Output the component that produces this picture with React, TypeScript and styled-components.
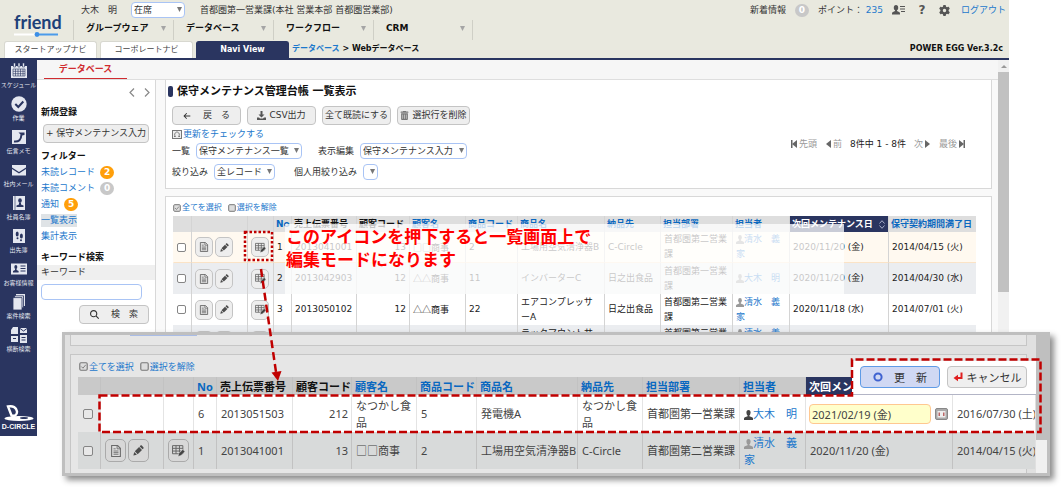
import React from 'react';
import styled, { createGlobalStyle, css } from 'styled-components';
import { FaArrowLeft, FaGear, FaMagnifyingGlass, FaTrashCan } from 'react-icons/fa6';

const navy = '#2a3560';
const link = '#1c78cc';
const red = '#c00000';

const Global = createGlobalStyle`
  *, *::before, *::after { box-sizing: border-box; }
  body {
    margin: 0;
    background: #fff;
    color: #333;
    font: 9px/15px "DejaVu Sans", "Noto Sans CJK JP", sans-serif;
  }
  button, input, select { font: inherit; color: inherit; margin: 0; }
  a { color: ${link}; text-decoration: none; }
  svg { display: block; flex: none; }
  ul { list-style: none; margin: 0; padding: 0; }
`;

const Page = styled.div`
  position: relative;
  min-height: 100vh;
  padding-right: 54px;
  overflow: hidden;
`;

/* ---------- header ---------- */

const Header = styled.header`
  background: #e9e9df;
  border-bottom: 2px solid ${navy};
`;

const HeaderTop = styled.div`
  display: flex;
`;

const Brand = styled.div`
  width: 73px;
  padding: 13px 0 0 14px;
  color: #1d4078;
  font: bold 18px/19px Lato, "Open Sans", sans-serif;
`;

const HeaderRows = styled.div`
  flex: 1;
  min-width: 0;
`;

const StatusRow = styled.div`
  display: flex;
  align-items: center;
  height: 20px;
  padding: 0 3px 0 8px;
  white-space: nowrap;
`;

const PersonName = styled.span`
  width: 50px;
`;

const Department = styled.span`
  margin-left: 15px;
`;

const Utilities = styled.div`
  display: flex;
  align-items: center;
  gap: 9px;
  margin-left: auto;
`;

const IconLink = styled.a`
  display: flex;
  justify-content: center;
  width: 14px;
  color: #555;
  font-weight: bold;
  font-size: 12px;
`;

const Badge = styled.span<{ $tone: 'orange' | 'gray' }>`
  display: inline-flex;
  align-items: center;
  justify-content: center;
  width: 14px;
  height: 13px;
  border-radius: 7px;
  background: ${p => (p.$tone === 'orange' ? '#ff9f0a' : '#c8c8c8')};
  color: #fff;
  font-weight: bold;
  line-height: 13px;
`;

const MainNav = styled.nav`
  display: flex;
  height: 20px;
`;

const NavItem = styled.a`
  display: flex;
  align-items: center;
  justify-content: space-between;
  width: 100px;
  padding: 0 7px 4px 12px;
  border-left: 1px solid #cfcfc6;
  color: #111;
  font-weight: bold;
  &:last-child { border-right: 1px solid #cfcfc6; }
`;

const TabRow = styled.div`
  display: flex;
  align-items: flex-end;
  gap: 3px;
  height: 18px;
  padding-left: 4px;
  font-size: 8px;
`;

const Tab = styled.a<{ $active?: boolean }>`
  width: 93px;
  height: 17px;
  border: 1px solid ${p => (p.$active ? navy : '#d8d8d0')};
  border-bottom: 0;
  border-radius: 3px 3px 0 0;
  background: ${p => (p.$active ? navy : '#fff')};
  color: ${p => (p.$active ? '#fff' : '#444')};
  font-weight: ${p => (p.$active ? 'bold' : 'normal')};
  text-align: center;
`;

const Crumbs = styled.div`
  color: #111;
  font-weight: bold;
  line-height: 18px;
`;

const Version = styled.div`
  margin-left: auto;
  padding-right: 6px;
  color: #111;
  font-weight: bold;
  line-height: 18px;
`;

/* ---------- form parts ---------- */

const SelectBox = styled.span<{ $width: number }>`
  position: relative;
  display: inline-block;
  width: ${p => p.$width}px;
  height: 16px;
  &::after {
    content: "";
    position: absolute;
    right: 3px;
    top: 5px;
    width: 5px;
    height: 5px;
    background: #777;
    clip-path: polygon(0 0, 100% 0, 50% 100%);
    pointer-events: none;
  }
  select {
    appearance: none;
    display: block;
    width: 100%;
    height: 16px;
    padding: 0 2px;
    border: 1px solid #a9c4f5;
    border-radius: 4px;
    background: #fff;
    line-height: 14px;
  }
`;

const Button = styled.button<{ $width: number }>`
  display: inline-flex;
  align-items: center;
  justify-content: center;
  gap: 3px;
  width: ${p => p.$width}px;
  height: 19px;
  padding: 0;
  border: 1px solid #c4c4c4;
  border-radius: 4px;
  background: #eee;
  white-space: nowrap;
`;

const IconButton = styled.button<{ $large?: boolean }>`
  display: inline-flex;
  align-items: center;
  justify-content: center;
  width: ${p => (p.$large ? 21 : 18)}px;
  height: ${p => (p.$large ? 23 : 20)}px;
  padding: 0;
  border: 1px solid ${p => (p.$large ? '#aaa' : '#c4c4c4')};
  border-radius: 5px;
  background: ${p => (p.$large ? '#d8d8d8' : '#eee')};
  color: #555;
  vertical-align: middle;
  & + & { margin-left: 2px; }
`;

const Check = styled.input<{ $large?: boolean }>`
  appearance: none;
  display: block;
  width: ${p => (p.$large ? 10 : 9)}px;
  height: ${p => (p.$large ? 10 : 9)}px;
  border: 1px solid #858585;
  border-radius: 2px;
  background: ${p => (p.$large ? '#e8e8e8' : '#fff')};
`;

/* ---------- body ---------- */

const Body = styled.div`
  display: flex;
  min-height: 376px;
`;

const Rail = styled.nav`
  display: flex;
  flex-direction: column;
  width: 37px;
  background: ${navy};
`;

const RailItem = styled.a`
  display: flex;
  flex-direction: column;
  align-items: center;
  gap: 2px;
  height: 33px;
  padding-top: 3px;
  color: #e8eaf2;
  font-size: 6px;
  line-height: 8px;
  white-space: nowrap;
`;

const RailLogo = styled.div`
  display: flex;
  flex-direction: column;
  align-items: center;
  margin-top: auto;
  padding-bottom: 5px;
  color: #fff;
  font: bold 7px/9px "Liberation Sans", sans-serif;
  white-space: nowrap;
`;

const Content = styled.div`
  flex: 1;
  min-width: 0;
  display: flex;
  flex-direction: column;
`;

const SubHead = styled.div`
  height: 20px;
  padding-left: 7px;
  border-bottom: 1px solid #dedede;
  background: #f6f6f6;
`;

const SubTab = styled.a`
  display: block;
  width: 83px;
  height: 19px;
  border-bottom: 1px solid #d02b30;
  color: #d02b30;
  font-weight: bold;
  line-height: 18px;
  text-align: center;
`;

const Columns = styled.div`
  flex: 1;
  display: flex;
  background: #f9f9f9;
`;

const SidePanel = styled.aside`
  width: 119px;
  border-right: 1px solid #d8d8d8;
  background: #fff;
`;

const Pagers = styled.div`
  display: flex;
  justify-content: flex-end;
  align-items: center;
  gap: 9px;
  height: 24px;
  padding-right: 5px;
  color: #888;
`;

const SideTitle = styled.h2<{ $top?: boolean }>`
  margin: ${p => (p.$top ? 5 : 0)}px 0 0;
  padding-left: 4px;
  color: #111;
  font-size: 9px;
  line-height: 16px;
`;

const NewEntry = styled.div`
  padding: 4px 0 0 6px;
`;

const FilterList = styled.ul`
  padding-left: 4px;
`;

const FilterItem = styled.li<{ $selected?: boolean }>`
  display: flex;
  align-items: center;
  gap: 5px;
  height: 16px;
  a { background: ${p => (p.$selected ? '#dfe3e6' : 'transparent')}; line-height: 13px; }
`;

const KeywordLabel = styled.label`
  display: block;
  padding-left: 4px;
  background: #efefef;
  line-height: 15px;
`;

const KeywordInput = styled.input`
  display: block;
  width: 101px;
  height: 16px;
  margin: 4px 0 5px 4px;
  border: 1px solid #a9c4f5;
  border-radius: 4px;
  background: #fff;
`;

const SearchRow = styled.div`
  display: flex;
  justify-content: flex-end;
  padding-right: 6px;
`;

const MainArea = styled.main`
  flex: 1;
  min-width: 0;
  display: flex;
  flex-direction: column;
  gap: 7px;
  padding: 0 6px 0 9px;
`;

const Panel = styled.section<{ $fill?: boolean }>`
  ${p => p.$fill ? css`flex: 1; border-top: 1px solid #d8d8d8;` : css`border-bottom: 1px solid #d8d8d8;`}
  border-left: 1px solid #d8d8d8;
  border-right: 1px solid #d8d8d8;
  background: #fff;
`;

const ControlPanel = styled(Panel)`
  display: flex;
  align-items: center;
  justify-content: space-between;
  padding: 0 26px 8px 6px;
`;

const PageTitle = styled.h1`
  display: flex;
  align-items: center;
  gap: 4px;
  height: 22px;
  margin: 0 0 4px -4px;
  color: #111;
  font-size: 11px;
  &::before {
    content: "";
    width: 5px;
    height: 11px;
    border-radius: 2px;
    background: ${navy};
  }
`;

const ButtonRow = styled.div`
  display: flex;
  gap: 6px;
`;

const CheckLink = styled.a`
  display: flex;
  align-items: center;
  gap: 1px;
  height: 18px;
`;

const FieldRow = styled.div`
  display: flex;
  align-items: center;
  gap: 16px;
  margin-bottom: 5px;
  label { display: flex; align-items: center; gap: 6px; }
  &:last-child { gap: 19px; margin-bottom: 0; }
`;

const Pager = styled.nav`
  display: flex;
  gap: 8px;
  padding-top: 28px;
  color: #222;
  white-space: nowrap;
  a { display: flex; align-items: center; gap: 2px; color: #999; }
`;

const SelectLinks = styled.div<{ $large?: boolean }>`
  display: flex;
  align-items: center;
  gap: 6px;
  height: ${p => (p.$large ? 22 : 19)}px;
  padding-top: ${p => (p.$large ? 0 : 2)}px;
  padding-left: ${p => (p.$large ? 1 : 0)}px;
  font-size: ${p => (p.$large ? 9 : 8)}px;
  a { display: flex; align-items: center; gap: 1px; }
`;

const ListBody = styled.div`
  padding: 0 15px 0 7px;
`;

const Table = styled.table`
  width: 100%;
  table-layout: fixed;
  border-collapse: separate;
  border-spacing: 0;
  th, td { padding: 0 3px; overflow: hidden; border-left: 1px solid #d4d4d4; }
  th:first-child, td:first-child { border-left-color: transparent; }
  td { height: 31px; vertical-align: middle; color: #222; }
  th { height: 16px; background: #dedede; color: #111; text-align: left; white-space: nowrap; padding: 0 0 0 2px; }
`;

const Row = styled.tr<{ $tone?: 'cream' | 'gray' }>`
  td {
    background: ${p => (p.$tone === 'cream' ? '#fff9f0' : p.$tone === 'gray' ? '#ebedf0' : '#fff')};
    ${p => p.$tone === 'cream' && 'border-bottom: 1px solid #fbe3c6;'}
  }
`;

const Th = styled.th<{ $sorted?: boolean }>`
  && {
    ${p => p.$sorted && `background: ${navy};`}
  }
  a { color: ${p => (p.$sorted ? '#fff' : '#0a68c0')}; }
`;

const SortLabel = styled.a`
  display: flex;
  align-items: center;
  justify-content: space-between;
  padding-right: 3px;
`;

const Cell = styled.td<{ $right?: boolean; $nowrap?: boolean }>`
  text-align: ${p => (p.$right ? 'right' : 'left')};
  white-space: ${p => (p.$nowrap ? 'nowrap' : 'normal')};
`;

const CustomerCell = styled(Cell)`
  font-family: "Noto Sans CJK JP", sans-serif;
`;

const Person = styled.a`
  svg { display: inline-block; vertical-align: -2px; }
`;

const ScrollBar = styled.div`
  width: 11px;
  padding-top: 10px;
  background: #f1f1f1;
  &::before {
    content: "";
    display: block;
    width: 0;
    margin: -5px 0 4px 3px;
    border: 3px solid transparent;
    border-top: 0;
    border-bottom: 3px solid #999;
  }
  &::after { content: ""; display: block; height: 220px; background: #c1c1c1; }
`;

/* ---------- notes over the page ---------- */

const Note = styled.p`
  position: absolute;
  left: 285px;
  top: 224px;
  width: 559px;
  height: 70px;
  margin: 0;
  padding: 0 1px;
  background: rgba(255, 255, 255, 0.75);
  color: #f00;
  font: bold 17px/23px "Noto Sans CJK JP", sans-serif;
`;

const Marks = styled.svg`
  position: absolute;
  left: 0;
  top: 0;
  pointer-events: none;
`;

const Detail = styled.section`
  position: absolute;
  left: 62px;
  right: 13px;
  top: 332px;
  height: 144px;
  display: flex;
  border: 3px solid #bfbfbf;
  background: #e0e0e0;
  box-shadow: 4px 4px 6px rgba(0, 0, 0, 0.45);
  font: 11px/17px "Noto Sans", "Noto Sans CJK JP", sans-serif;
`;

const DetailArea = styled.div`
  position: relative;
  flex: 1;
  min-width: 0;
  display: flex;
  flex-direction: column;
  gap: 8px;
  padding: 0 9px 0 5px;
  overflow: hidden;
`;

const DetailTop = styled.div`
  height: 11px;
  padding: 0 0 0 59px;
  border: 1px solid #c6c6c6;
  border-top: 0;
  background: #e6e6e6;
  &::before {
    content: "";
    display: block;
    width: 67px;
    height: 1px;
    background: #a9bce6;
  }
`;

const DetailList = styled.div`
  flex: 1;
  padding-left: 7px;
  border: 1px solid #c6c6c6;
  border-bottom: 0;
  background: #e6e6e6;
`;

const DetailTable = styled(Table)`
  width: calc(100% + 9px);
  th, td { border-left-color: #c2c2c2; }
  th { height: 18px; padding-left: 3px; background: #c9c9c9; }
  td { height: 37px; padding-left: 4px; background: #d8dada; color: #444; }
`;

const EditRow = styled.tr`
  && td { background: #fff; border-left-color: #e4e4e4; }
  && td:first-child { background: #e6e6e6; border-left-color: transparent; }
`;

const EditField = styled.div`
  display: flex;
  align-items: center;
  gap: 4px;
  input {
    width: 122px;
    height: 20px;
    margin-left: -1px;
    padding: 0 2px;
    border: 1px solid #ffc891;
    border-radius: 4px;
    background: #ffffcb;
  }
`;

const Actions = styled.div`
  position: absolute;
  right: 0;
  top: 26px;
  display: flex;
  gap: 7px;
  height: 34px;
  padding: 5px 9px 0 8px;
  border-bottom: 1px solid #b3b5c6;
  background: #fff;
`;

const ActionButton = styled(Button)<{ $primary?: boolean }>`
  height: 22px;
  gap: ${p => (p.$primary ? 11 : 4)}px;
  border-color: ${p => (p.$primary ? '#5f9be6' : '#c4c4c4')};
  background: ${p => (p.$primary ? '#d0d8f3' : '#efefef')};
`;

const DetailScroll = styled.div`
  width: 11px;
  background: #f0f0f0;
  &::before { content: ""; display: block; height: 105px; background: #bfbfbf; }
`;

/* ---------- drawings ---------- */

const Down = () => (
  <svg width="5" height="5" viewBox="0 0 6 6"><path d="M0 0h6L3 6z" fill="#a5a5a5" /></svg>
);

const BrandLine = () => (
  <svg width="44" height="5" viewBox="0 0 44 5">
    <path d="M0 2.5h21" stroke="#fff" strokeWidth="2" />
    <path d="M22 2.5h22" stroke="#4b9bea" strokeWidth="2" />
    <circle cx="23" cy="2.5" r="2.4" fill="#3c8fe6" />
  </svg>
);

const UserIcon = ({ color = '#555', size = 9 }: { color?: string; size?: number }) => (
  <svg width={size} height={size + 1} viewBox="0 0 9 10" fill={color}>
    <ellipse cx="4.5" cy="2.7" rx="2.1" ry="2.7" />
    <path d="M3.6 4.5h1.8v1.7l2.6 1c.7.3 1 .7 1 1.4V10H0V8.600c0-.7.3-1.100 1-1.400l2.600-1z" />
  </svg>
);

const UserCard = () => (
  <svg width="13" height="10" viewBox="0 0 13 10" fill="#555">
    <ellipse cx="4" cy="2.700" rx="2.200" ry="2.700" />
    <path d="M3 4h2v2l2 1c.7.3 1 .7 1 1.400V9.500H0V8.400C0 7.700.3 7.300 1 7l2-1z" />
    <path d="M8 1h5v1H8zM8 3.500h5v1H8zM9 6h4v1H9z" />
  </svg>
);

const DocIcon = ({ size }: { size: number }) => (
  <svg width={size} height={size} viewBox="0 0 11 11" fill="none" stroke="#6a6a6a">
    <path d="M1.500.5h5.500l2.500 2.500v7.500h-8z" fill="#ddd" />
    <path d="M6.500.5v3h3M3.200 3.500h2M3.200 5.500h4.600M3.200 7h4.600M3.200 8.500h4.600" strokeWidth=".8" />
  </svg>
);

const PencilIcon = ({ size }: { size: number }) => (
  <svg width={size} height={size} viewBox="0 0 11 11" fill="#4c4c4c">
    <path d="M.4 10.600l.9-3.500 2.600 2.600z" />
    <path d="M1.800 6.300l4.300-4.300 2.900 2.900-4.300 4.300z" />
    <path d="M6.700 1.400l.8-.8c.4-.4.9-.4 1.300 0l1.600 1.600c.4.4.4.9 0 1.300l-.8.8z" />
  </svg>
);

const DownloadIcon = () => (
  <svg width="9" height="9" viewBox="0 0 9 9" fill="#555">
    <path d="M3.500 0h2v3.500h2L4.500 6.500l-3-3h2zM0 6.500h2l1 1h3l1-1h2V9H0z" />
  </svg>
);

const RefreshBox = () => (
  <svg width="10" height="9" viewBox="0 0 10 9" fill="none" stroke="#777">
    <rect x=".5" y=".5" width="9" height="8" fill="#eee" />
    <path d="M2 6.500h1.500c-2-2 0-4.500 1.500-4.500s3.500 2.500 1.500 4.500H8" />
  </svg>
);

const TickBox = ({ on, size = 8 }: { on?: boolean; size?: number }) => (
  <svg width={size} height={size} viewBox="0 0 8 8" fill="none" stroke="#777">
    <rect x=".7" y=".7" width="6.600" height="6.600" rx="1" fill="#ddd" />
    {on && <path d="M2 4l1.500 1.500L6 2.500" strokeWidth=".8" />}
  </svg>
);

const GridEdit = ({ size = 11 }: { size?: number }) => (
  <svg width={size} height={size} viewBox="0 0 12 12">
    <path d="M.5 1.500h9.500v7.500H.5zM.5 4H10M.5 6.500H10M3.700 1.500V9M6.900 1.500V9" fill="none" stroke="#666" strokeWidth=".9" />
    <path d="M5.500 11.500l.7-2.800L10 5l2 2-3.700 3.700z" fill="#444" stroke="#e8e8e8" strokeWidth=".5" />
  </svg>
);

const SortMark = () => (
  <svg width="6" height="9" viewBox="0 0 6 9" fill="none" stroke="#c5cae0" strokeWidth=".8">
    <path d="M.5 3.500L3 .7l2.500 2.800M.5 5.500L3 8.300l2.500-2.800" />
  </svg>
);

const Step = ({ back, end }: { back?: boolean; end?: boolean }) => (
  <svg width="6" height="8" viewBox="0 0 6 8" fill="#666">
    <g transform={back ? undefined : 'matrix(-1 0 0 1 6 0)'}>
      <path d="M6 0v8L1 4z" />
      {end && <path d="M0 0h1.500v8H0z" />}
    </g>
  </svg>
);

const Chevron = ({ back }: { back?: boolean }) => (
  <svg width="6" height="9" viewBox="0 0 6 9" fill="none" stroke="#888" strokeWidth="1.200">
    <path d={back ? 'M5 .5l-4 4 4 4' : 'M1 .5l4 4-4 4'} />
  </svg>
);

const CalendarButtonIcon = () => (
  <svg width="13" height="12" viewBox="0 0 13 12">
    <rect x=".5" y=".5" width="12" height="11" rx="1.500" fill="#aaa" stroke="#888" />
    <path d="M2.500 3h8v6.500h-8z" fill="#eee" />
    <path d="M3.500 4.500h1.500v3.500H3.500zM8 4.500h1.500v3.500H8z" fill="#b66" />
  </svg>
);

const ReturnIcon = () => (
  <svg width="10" height="10" viewBox="0 0 10 10" fill="none" stroke="#e02020" strokeWidth="2">
    <path d="M8.500 .5v5.500H4" /><path d="M5 2.800v6.400L.5 6z" fill="#e02020" stroke="none" />
  </svg>
);

const railArt: Record<string, React.ReactNode> = {
  calendar: <><path d="M0 3h16v12H0z" /><path d="M2.500 0h2v4h-2zM7 0h2v4H7zM11.500 0h2v4h-2z" stroke={navy} strokeWidth=".6" /><path d="M2 6h12v7H2zM2 8.300h12M2 10.700h12M4.500 6v7M7 6v7M9.500 6v7M12 6v7" fill="none" stroke={navy} strokeWidth=".6" /></>,
  task: <><circle cx="8" cy="8" r="7.700" /><path d="M4.300 8l3 3 5-5.500" fill="none" stroke={navy} strokeWidth="2" /></>,
  memo: <><path d="M1 1h14v14H1z" /><path d="M3 12.500c5 .5 7-1.500 7.500-7" fill="none" stroke={navy} strokeWidth="2" /><path d="M7.500 3.500h6v2.500l-3 .5z" fill={navy} /></>,
  mail: <><path d="M1 3h14v2.500L8 10 1 5.500z" /><path d="M1 7l7 4.500L15 7v6.500H1z" /></>,
  member: <><path d="M2 1h12v14H2z" /><path d="M4 1v14" stroke={navy} strokeWidth=".6" /><ellipse cx="9" cy="5.500" rx="1.800" ry="2.300" fill={navy} /><path d="M5.500 12v-1.500l2.500-1v-2h2v2l2.500 1V12z" fill={navy} /></>,
  steps: <><path d="M2 1h12v14H2z" /><ellipse cx="6.200" cy="6" rx="1.500" ry="2.500" fill={navy} /><ellipse cx="10.400" cy="8" rx="1.500" ry="2.500" fill={navy} /><circle cx="6.500" cy="10.300" r="1" fill={navy} /><circle cx="10" cy="12.200" r="1" fill={navy} /></>,
  customer: <><path d="M0 2.500h16v11H0z" /><ellipse cx="4.800" cy="6" rx="1.500" ry="1.900" fill={navy} /><path d="M2 11.500V10l2-1V7.500h1.600V9l2 1v1.500z" fill={navy} /><path d="M9.500 5h5M9.500 7.500h5M9.500 10h5" stroke={navy} /></>,
  cases: <><path d="M5 0h9v12H5z" /><path d="M3.500 1.800h9v12h-9z" stroke={navy} strokeWidth=".8" /><path d="M2 3.600h9V16H2z" stroke={navy} strokeWidth=".8" /></>,
  cross: <><path d="M2 0h5v7H0V3zM9 1h7v5H9zM0 9h7v6H0zM9 8h7v8H9z" /><path d="M9 1.500l3.500 2.500L16 1.500M2 11.500h3M10.500 10.500h4M10.500 13h4" fill="none" stroke={navy} /></>,
};

const RailIcon = ({ name }: { name: string }) => (
  <svg width="16" height="16" viewBox="0 0 16 16" fill="#e4e7f0">{railArt[name]}</svg>
);

const railItems = [
  ['calendar', 'スケジュール'], ['task', '作業'], ['memo', '伝言メモ'], ['mail', '社内メール'], ['member', '社員名簿'],
  ['steps', '出先簿'], ['customer', 'お客様情報'], ['cases', '案件検索'], ['cross', '横断検索'],
];

/* ---------- data ---------- */

type Rec = {
  no: string; slip: string; code: string; customer: string; item: string; product: React.ReactNode;
  dest: string; dept: string; owner: string; next: string; end: string; tone?: 'cream' | 'gray';
};

const records: Rec[] = [
  { no: '1', slip: '2013041001', code: '13', customer: '□□商事', item: '2', product: '工場用空気清浄器B', dest: 'C-Circle', dept: '首都圏第二営業課', owner: '清水　義家', next: '2020/11/20 (金)', end: '2014/04/15 (火)', tone: 'cream' },
  { no: '2', slip: '2013042903', code: '12', customer: '△△商事', item: '11', product: 'インバーターC', dest: '日之出食品', dept: '首都圏第一営業課', owner: '大木　明', next: '2020/11/20 (金)', end: '2014/04/30 (水)', tone: 'gray' },
  { no: '3', slip: '2013050102', code: '12', customer: '△△商事', item: '22', product: <>エアコンプレッサ<br />ーA</>, dest: '日之出食品', dept: '首都圏第二営業課', owner: '清水　義家', next: '2020/11/18 (水)', end: '2014/07/01 (火)' },
  { no: '', slip: '', code: '', customer: '', item: '', product: <>ラックマウントサ<br />ーバー</>, dest: '', dept: '首都圏第二営業課', owner: '清水　義家', next: '', end: '', tone: 'gray' },
];

const heads: [string, boolean][] = [
  ['No', true], ['売上伝票番号', false], ['顧客コード', false], ['顧客名', true], ['商品コード', true],
  ['商品名', true], ['納品先', true], ['担当部署', true], ['担当者', true],
];

const mainCols = [18, 56, 26, 18, 65, 53, 56, 52, 87, 56, 72, 57, 99];
const detailCols = [22, 63, 30, 23, 76, 59, 65, 60, 101, 65, 97, 66, 147];

const Cols = ({ widths }: { widths: number[] }) => (
  <colgroup>{widths.map((w, i) => <col key={i} width={w} />)}<col /></colgroup>
);

const HeadRow = () => (
  <thead>
    <tr>
      <Th /><Th /><Th />
      {heads.map(([text, linked]) => <Th key={text}>{linked ? <a href="#sort">{text}</a> : text}</Th>)}
      <Th $sorted><SortLabel href="#sort">次回メンテナンス日<SortMark /></SortLabel></Th>
      <Th><a href="#sort">保守契約期間満了日</a></Th>
    </tr>
  </thead>
);

const Select = ({ width, value, label }: { width: number; value: string; label?: string }) => (
  <SelectBox $width={width}><select aria-label={label}><option>{value}</option></select></SelectBox>
);

const RowTools = ({ large }: { large?: boolean }) => (
  <>
    <IconButton $large={large} aria-label="詳細"><DocIcon size={large ? 12 : 10} /></IconButton>
    <IconButton $large={large} aria-label="編集"><PencilIcon size={large ? 11 : 9} /></IconButton>
  </>
);

export default function App() {
  return (
    <Page>
      <Global />
      <Header>
        <HeaderTop>
          <Brand>friend<BrandLine /></Brand>
          <HeaderRows>
            <StatusRow>
              <PersonName>大木　明</PersonName>
              <Select width={54} value="在席" label="在席状況" />
              <Department>首都圏第一営業課(本社 営業本部 首都圏営業部)</Department>
              <Utilities>
                <span>新着情報</span>
                <Badge $tone="gray">0</Badge>
                <span>ポイント： <a href="#point">235</a></span>
                <IconLink href="#profile" aria-label="プロフィール"><UserCard /></IconLink>
                <IconLink href="#help">?</IconLink>
                <IconLink href="#settings" aria-label="設定"><FaGear size={11} /></IconLink>
                <a href="#logout">ログアウト</a>
              </Utilities>
            </StatusRow>
            <MainNav>
              {['グループウェア', 'データベース', 'ワークフロー', 'CRM'].map(t => (
                <NavItem key={t} href="#menu">{t}<Down /></NavItem>
              ))}
            </MainNav>
          </HeaderRows>
        </HeaderTop>
        <TabRow>
          <Tab href="#startup">スタートアップナビ</Tab>
          <Tab href="#corporate">コーポレートナビ</Tab>
          <Tab href="#navi" $active>Navi View</Tab>
          <Crumbs><a href="#db">データベース</a> &gt; Webデータベース</Crumbs>
          <Version>POWER EGG Ver.3.2c</Version>
        </TabRow>
      </Header>

      <Body>
        <Rail>
          {railItems.map(([icon, text]) => (
            <RailItem key={text} href="#app"><RailIcon name={icon} />{text}</RailItem>
          ))}
          <RailLogo>
            <svg width="31" height="17" viewBox="0 0 31 17" fill="none">
              <ellipse cx="16" cy="13.500" rx="14.500" ry="2.400" fill="#fff" />
              <ellipse cx="21" cy="13" rx="4" ry="1" fill={navy} />
              <path d="M5 1.500c5-1 8.500 1 9 5 .3 3.500-2.500 5-5.500 4z" fill={navy} stroke="#fff" strokeWidth="2.400" />
            </svg>
            D-CIRCLE
          </RailLogo>
        </Rail>

        <Content>
          <SubHead><SubTab href="#db">データベース</SubTab></SubHead>
          <Columns>
            <SidePanel>
              <Pagers><Chevron back /><Chevron /></Pagers>
              <SideTitle>新規登録</SideTitle>
              <NewEntry><Button $width={106}>+ 保守メンテナンス入力</Button></NewEntry>
              <SideTitle $top>フィルター</SideTitle>
              <FilterList>
                <FilterItem><a href="#f">未読レコード</a><Badge $tone="orange">2</Badge></FilterItem>
                <FilterItem><a href="#f">未読コメント</a><Badge $tone="gray">0</Badge></FilterItem>
                <FilterItem><a href="#f">通知</a><Badge $tone="orange">5</Badge></FilterItem>
                <FilterItem $selected><a href="#f">一覧表示</a></FilterItem>
                <FilterItem><a href="#f">集計表示</a></FilterItem>
              </FilterList>
              <SideTitle $top>キーワード検索</SideTitle>
              <KeywordLabel htmlFor="keyword">キーワード</KeywordLabel>
              <KeywordInput id="keyword" type="text" />
              <SearchRow><Button $width={70}><FaMagnifyingGlass size={9} />　検　索</Button></SearchRow>
            </SidePanel>

            <MainArea>
              <ControlPanel>
                <div>
                  <PageTitle>保守メンテナンス管理台帳 一覧表示</PageTitle>
                  <ButtonRow>
                    <Button $width={69}><FaArrowLeft size={8} />　戻　る</Button>
                    <Button $width={69}><DownloadIcon />CSV出力</Button>
                    <Button $width={69}>全て既読にする</Button>
                    <Button $width={73}><FaTrashCan size={9} color="#777" />選択行を削除</Button>
                  </ButtonRow>
                  <CheckLink href="#check"><RefreshBox />更新をチェックする</CheckLink>
                  <FieldRow>
                    <label>一覧<Select width={106} value="保守メンテナンス一覧" /></label>
                    <label>表示編集<Select width={107} value="保守メンテナンス入力" /></label>
                  </FieldRow>
                  <FieldRow>
                    <label>絞り込み<Select width={61} value="全レコード" /></label>
                    <label>個人用絞り込み<Select width={15} value="" /></label>
                  </FieldRow>
                </div>
                <Pager>
                  <a href="#first"><Step back end />先頭</a>
                  <a href="#prev"><Step back />前</a>
                  <span>8件中 1 - 8件</span>
                  <a href="#next">次<Step /></a>
                  <a href="#last">最後<Step end /></a>
                </Pager>
              </ControlPanel>

              <Panel $fill>
                <ListBody>
                  <SelectLinks>
                    <a href="#all"><TickBox on />全てを選択</a>
                    <a href="#none"><TickBox />選択を解除</a>
                  </SelectLinks>
                  <Table>
                    <Cols widths={mainCols} />
                    <HeadRow />
                    <tbody>
                      {records.map((r, i) => (
                        <Row key={i} $tone={r.tone}>
                          <Cell><Check type="checkbox" aria-label="行を選択" /></Cell>
                          <Cell $nowrap><RowTools /></Cell>
                          <Cell><IconButton aria-label="一覧編集"><GridEdit /></IconButton></Cell>
                          <Cell>{r.no}</Cell>
                          <Cell $nowrap>{r.slip}</Cell>
                          <Cell $right>{r.code}</Cell>
                          <CustomerCell $nowrap>{r.customer}</CustomerCell>
                          <Cell>{r.item}</Cell>
                          <Cell $nowrap>{r.product}</Cell>
                          <Cell $nowrap>{r.dest}</Cell>
                          <Cell>{r.dept}</Cell>
                          <Cell><Person href="#user"><UserIcon color="#999" size={8} />{r.owner}</Person></Cell>
                          <Cell $nowrap>{r.next}</Cell>
                          <Cell $nowrap>{r.end}</Cell>
                        </Row>
                      ))}
                    </tbody>
                  </Table>
                </ListBody>
              </Panel>
            </MainArea>
          </Columns>
        </Content>
        <ScrollBar />
      </Body>

      <Note>このアイコンを押下すると一覧画面上で<br />編集モードになります</Note>

      <Detail>
        <DetailArea>
          <DetailTop />
          <DetailList>
            <SelectLinks $large>
              <a href="#all"><TickBox on size={9} />全てを選択</a>
              <a href="#none"><TickBox size={9} />選択を解除</a>
            </SelectLinks>
            <DetailTable>
              <Cols widths={detailCols} />
              <HeadRow />
              <tbody>
                <EditRow>
                  <Cell><Check $large type="checkbox" aria-label="行を選択" /></Cell>
                  <Cell /><Cell />
                  <Cell>6</Cell>
                  <Cell $nowrap>2013051503</Cell>
                  <Cell $right>212</Cell>
                  <Cell>なつかし食品</Cell>
                  <Cell>5</Cell>
                  <Cell>発電機A</Cell>
                  <Cell>なつかし食品</Cell>
                  <Cell $nowrap>首都圏第一営業課</Cell>
                  <Cell $nowrap><Person href="#user"><UserIcon color="#444" />大木　明</Person></Cell>
                  <Cell>
                    <EditField><input type="text" aria-label="次回メンテナンス日" defaultValue="2021/02/19 (金)" /><CalendarButtonIcon /></EditField>
                  </Cell>
                  <Cell $nowrap>2016/07/30 (土)</Cell>
                </EditRow>
                <tr>
                  <Cell><Check $large type="checkbox" aria-label="行を選択" /></Cell>
                  <Cell $nowrap><RowTools large /></Cell>
                  <Cell><IconButton $large aria-label="一覧編集"><GridEdit size={13} /></IconButton></Cell>
                  <Cell>1</Cell>
                  <Cell $nowrap>2013041001</Cell>
                  <Cell $right>13</Cell>
                  <CustomerCell>□□商事</CustomerCell>
                  <Cell>2</Cell>
                  <Cell $nowrap>工場用空気清浄器B</Cell>
                  <Cell>C-Circle</Cell>
                  <Cell $nowrap>首都圏第二営業課</Cell>
                  <Cell><Person href="#user"><UserIcon color="#999" />清水　義家</Person></Cell>
                  <Cell>2020/11/20 (金)</Cell>
                  <Cell $nowrap>2014/04/15 (火)</Cell>
                </tr>
              </tbody>
            </DetailTable>
          </DetailList>
          <Actions>
            <ActionButton $width={80} $primary>
              <svg width="10" height="10" viewBox="0 0 10 10"><circle cx="5" cy="5" r="3.600" fill="none" stroke="#3f62d0" strokeWidth="2" /></svg>
              更　新
            </ActionButton>
            <ActionButton $width={80}><ReturnIcon />キャンセル</ActionButton>
          </Actions>
        </DetailArea>
        <DetailScroll />
      </Detail>

      <Marks width="1063" height="490" viewBox="0 0 1063 490" fill="none" stroke={red}>
        <rect x="245" y="232" width="27" height="28" strokeWidth="2.500" strokeDasharray="2.500 2" />
        <path d="M261 269L276 372" strokeWidth="2.500" strokeDasharray="8 4" />
        <path d="M271.500 372.500l10-1.500-3.500 10z" fill={red} stroke="none" />
        <path d="M99.500 395.500H852V359.500H1040.500V432H99.500z" strokeWidth="2.500" strokeDasharray="8 3" />
      </Marks>
    </Page>
  );
}
